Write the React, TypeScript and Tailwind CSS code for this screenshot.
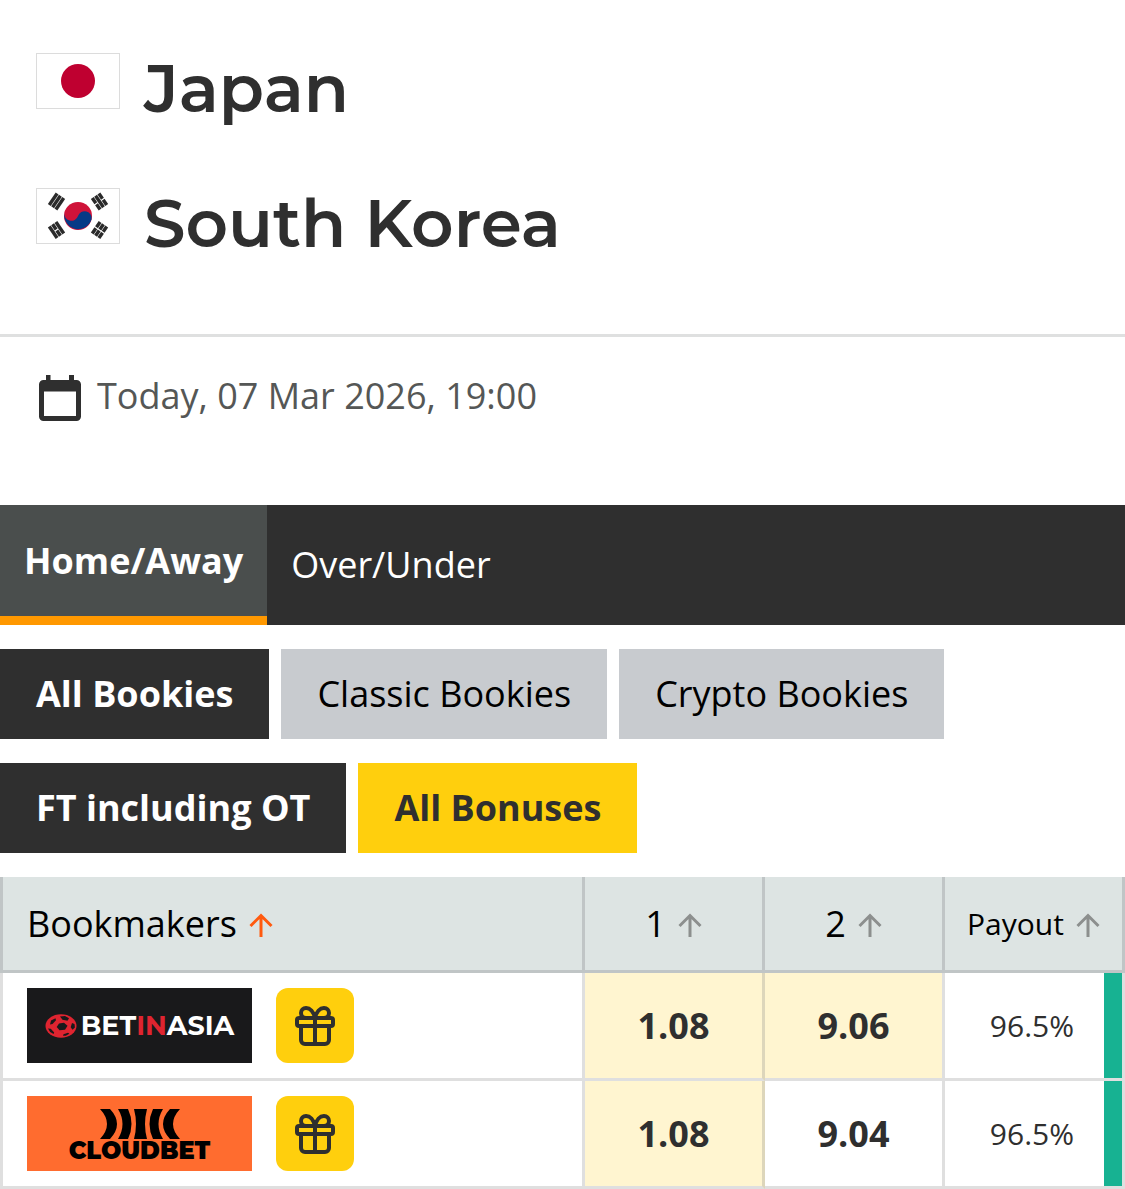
import { Gift } from "lucide-react";

const BAR = "#2a2a2a";

function JapanFlag() {
  return (
    <svg viewBox="0 0 84 56" className="h-14 w-[84px] shrink-0" role="img" aria-label="Flag of Japan">
      <rect x="0.5" y="0.5" width="83" height="55" fill="#fff" stroke="#dcdcdc" />
      <circle cx="42" cy="28" r="17" fill="#bf0030" />
    </svg>
  );
}

function Trigram({ x, y, angle, broken }: { x: number; y: number; angle: number; broken: boolean[] }) {
  return (
    <g transform={`translate(${x} ${y}) rotate(${angle})`} stroke={BAR} strokeWidth="3.4">
      {[-4, 0, 4].map((dx, i) => (
        <path key={dx} d={broken[i] ? `M${dx} -7V-0.6M${dx} 0.6V7` : `M${dx} -7V7`} />
      ))}
    </g>
  );
}

function KoreaFlag() {
  return (
    <svg viewBox="0 0 84 56" className="h-14 w-[84px] shrink-0" role="img" aria-label="Flag of South Korea">
      <rect x="0.5" y="0.5" width="83" height="55" fill="#fff" stroke="#dcdcdc" />
      <circle cx="42" cy="28" r="14" fill="#cf1339" />
      <path d="M28.5 24.4A7 7 0 0 0 42 28A7 7 0 0 1 55.5 31.6A14 14 0 0 1 28.5 24.4Z" fill="#063a86" />
      <Trigram x={20.5} y={13.5} angle={34} broken={[false, false, false]} />
      <Trigram x={63.5} y={13.5} angle={-34} broken={[true, false, true]} />
      <Trigram x={20.5} y={42} angle={-34} broken={[false, true, false]} />
      <Trigram x={63.5} y={42} angle={34} broken={[true, true, true]} />
    </svg>
  );
}

function CalendarIcon() {
  return (
    <svg viewBox="0 0 42 46" className="h-[46px] w-[42px] shrink-0" fill="#2f2f2f" aria-hidden="true">
      <path
        fillRule="evenodd"
        d="M7 0h4.500v5h18.500v-5h5v5h2.500a4.500 4.500 0 0 1 4.500 4.500v32a4.500 4.500 0 0 1-4.500 4.500h-33a4.500 4.500 0 0 1-4.500-4.500v-32a4.500 4.500 0 0 1 4.500-4.500h2.500zM5 16.500v24.500h32v-24.500z"
      />
    </svg>
  );
}

function SortArrow({ active = false }: { active?: boolean }) {
  return (
    <svg
      viewBox="0 0 24 24"
      className={active ? "mt-0.5 size-6 text-[#ff5a0f]" : "mt-0.5 size-6 text-[#8c8f8e]"}
      fill="none"
      stroke="currentColor"
      strokeWidth="3"
      aria-hidden="true"
    >
      <path d="M12 24V2.500M1.500 13L12 2.500L22.500 13" />
    </svg>
  );
}

function BetInAsiaLogo() {
  return (
    <a
      href="#betinasia"
      aria-label="BetInAsia"
      className="flex h-[75px] w-[225px] items-center justify-center gap-1 bg-[#19191b] font-['Montserrat','Lato',sans-serif] text-[27px] leading-none font-bold text-white"
    >
      <svg viewBox="0 0 32 24" className="h-6 w-8 shrink-0" aria-hidden="true">
        <ellipse cx="16" cy="12" rx="15.500" ry="11.700" fill="#df2430" />
        <g fill="#19191b">
          <path d="M14 9.500l5-.8 3.500 3-2.500 4-5.500.6-2.800-3.300z" />
          <path d="M15 2.500l5-.6 4 2.400-1.500 2.400-5-1z" />
          <path d="M6 6.500l4.500-2.300.5 2-3.500 3.800-2.500.4z" />
          <path d="M3 14.500l2.800.2 3.400 3.800-.6 1.600-3.500-2z" />
          <path d="M18.500 20.300l4.500-1.600 1.400 1.100-3.600 2h-2.800z" />
          <path d="M27 9l2.500 1 .4 3.500-2.400 2.300-1.800-2.600z" />
        </g>
      </svg>
      <span>
        BET<span className="text-[#df2430]">IN</span>ASIA
      </span>
    </a>
  );
}

function CloudbetLogo() {
  return (
    <a
      href="#cloudbet"
      aria-label="Cloudbet"
      className="flex h-[75px] w-[225px] flex-col items-center justify-center gap-1 bg-[#ff6c2f] font-['Montserrat','DejaVu_Sans',sans-serif] text-2xl leading-4 font-black text-black"
    >
      <svg viewBox="0 0 80 30" className="h-[30px] w-20" aria-hidden="true">
        <path d="M0 0H10Q24 15 10 30H0Q14 15 0 0Z" />
        <path d="M18 0H28Q35 15 28 30H18Q27 15 18 0Z" />
        <path d="M34 0H47Q43 15 47 30H34Q38 15 34 0Z" />
        <path d="M63 0H53Q46 15 53 30H63Q54 15 63 0Z" />
        <path d="M80 0H70Q56 15 70 30H80Q66 15 80 0Z" />
      </svg>
      CLOUDBET
    </a>
  );
}

const rows = [
  { logo: <BetInAsiaLogo />, home: "1.08", away: "9.06", awayBest: true, payout: "96.5%" },
  { logo: <CloudbetLogo />, home: "1.08", away: "9.04", awayBest: false, payout: "96.5%" },
];

const headCell = "h-24 border-r-3 border-b-3 border-[#c0c5c6] p-0 font-normal";
const bodyCell = "h-[108px] border-r-3 border-b-3 p-0";

export default function App() {
  return (
    <main className="w-full bg-white font-['Open_Sans','Noto_Sans',sans-serif] text-4xl text-[#2f2f2f]">
      <header className="flex flex-col gap-[47px] border-b-3 border-[#dfe0e0] px-9 pt-[45px] pb-[66px] font-['Montserrat','Inter',sans-serif] text-[66px] leading-[88px] font-semibold">
        <h1 className="flex items-start gap-6">
          <span className="pt-2">
            <JapanFlag />
          </span>
          Japan
        </h1>
        <h1 className="flex items-start gap-6">
          <span className="pt-2">
            <KoreaFlag />
          </span>
          South Korea
        </h1>
      </header>

      <p className="flex h-[168px] items-start gap-4 pt-9 pl-[39px] leading-[46px] text-[#555756]">
        <span className="pt-0.5">
          <CalendarIcon />
        </span>
        Today, 07 Mar 2026, 19:00
      </p>

      <nav className="flex h-[120px] bg-[#2f2f2f] text-white">
        <button className="border-b-9 border-[#ff9800] bg-[#4a4e4d] px-6 font-bold">Home/Away</button>
        <button className="px-6">Over/Under</button>
      </nav>

      <div className="mt-6 flex gap-3">
        <button className="h-[90px] bg-[#2f2f2f] px-9 font-bold text-white">All Bookies</button>
        <button className="h-[90px] bg-[#c8cbcf] px-9 text-black">Classic Bookies</button>
        <button className="h-[90px] bg-[#c8cbcf] px-9 text-black">Crypto Bookies</button>
      </div>

      <div className="mt-6 flex gap-3">
        <button className="h-[90px] bg-[#2f2f2f] px-9 font-bold text-white">FT including OT</button>
        <button className="h-[90px] bg-[#ffcf0d] px-9 font-bold">All Bonuses</button>
      </div>

      <table className="mt-6 w-full table-fixed border-separate border-spacing-0">
        <colgroup>
          <col />
          <col className="w-[180px]" />
          <col className="w-[180px]" />
          <col className="w-[180px]" />
        </colgroup>
        <thead className="bg-[#dde4e3] text-black">
          <tr>
            <th scope="col" className={`${headCell} border-l-3`}>
              <button className="flex items-center gap-3 pl-6">
                Bookmakers <SortArrow active />
              </button>
            </th>
            <th scope="col" className={headCell}>
              <button className="mx-auto flex items-center gap-3">
                1 <SortArrow />
              </button>
            </th>
            <th scope="col" className={headCell}>
              <button className="mx-auto flex items-center gap-3">
                2 <SortArrow />
              </button>
            </th>
            <th scope="col" className={headCell}>
              <button className="mx-auto flex items-center gap-3 text-3xl">
                Payout <SortArrow />
              </button>
            </th>
          </tr>
        </thead>
        <tbody>
          {rows.map((row, i) => (
            <tr key={i}>
              <td className={`${bodyCell} border-l-3 border-[#dfdfdf]`}>
                <div className="flex items-center gap-6 pl-6">
                  {row.logo}
                  <button
                    aria-label="Show bonus"
                    className="flex h-[75px] w-[78px] items-center justify-center rounded-xl bg-[#ffcf0d]"
                  >
                    <Gift className="size-12" strokeWidth={2} />
                  </button>
                </div>
              </td>
              <td className={`${bodyCell} border-r-[#ddd6bb] border-b-[#dfdfdf] bg-[#fff5d0] bg-clip-padding text-center font-bold`}>
                {row.home}
              </td>
              <td
                className={`${bodyCell} border-[#dfdfdf] text-center font-bold ${row.awayBest ? "bg-[#fff5d0] bg-clip-padding" : ""}`}
              >
                {row.away}
              </td>
              <td className={`${bodyCell} border-[#dfdfdf]`}>
                <div className="flex h-[105px] items-center justify-end gap-[30px] text-3xl">
                  {row.payout}
                  <span className="w-[18px] self-stretch bg-[#17b292]" />
                </div>
              </td>
            </tr>
          ))}
        </tbody>
      </table>
    </main>
  );
}
